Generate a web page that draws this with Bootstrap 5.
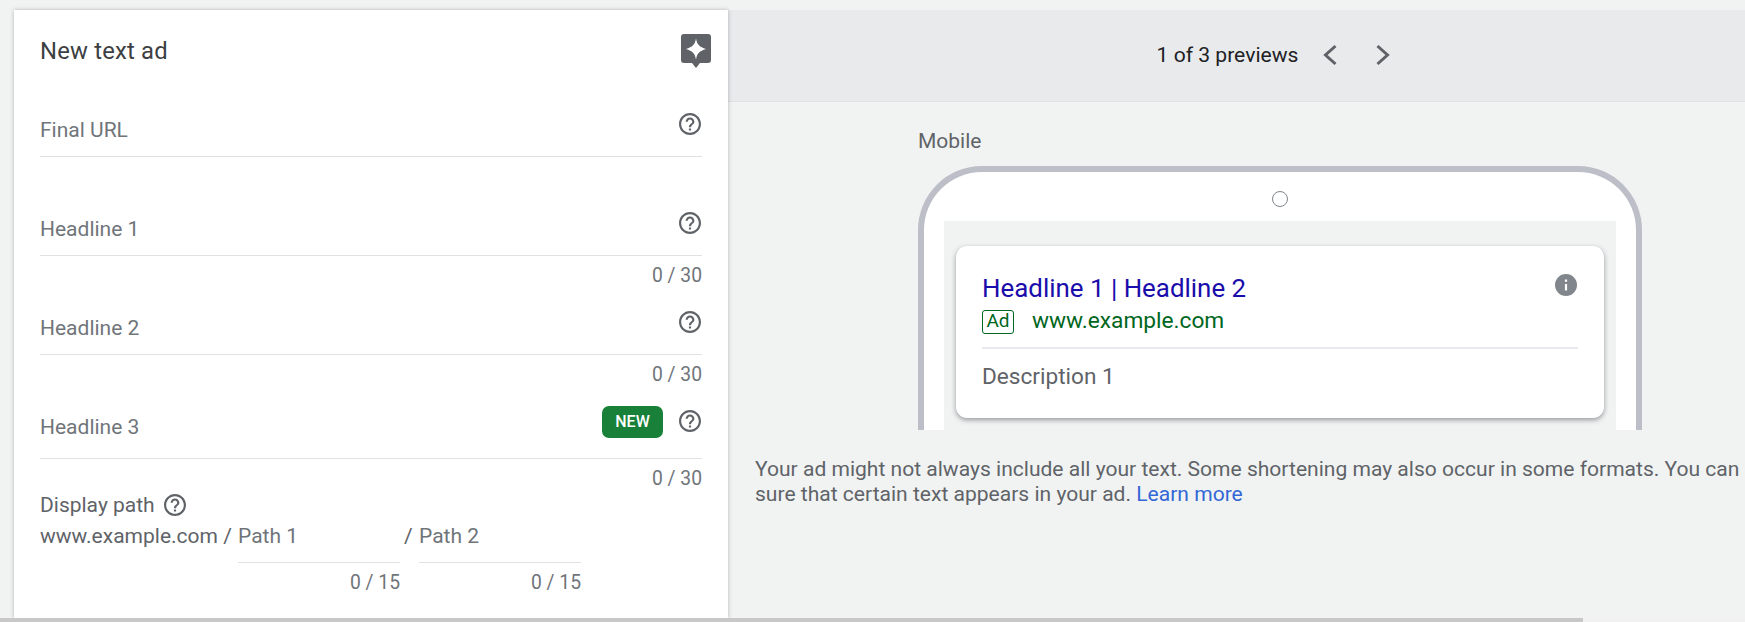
<!DOCTYPE html>
<html lang="en">
<head>
<meta charset="utf-8">
<title>New text ad</title>
<link href="https://cdn.jsdelivr.net/npm/bootstrap@5.3.0/dist/css/bootstrap.min.css" rel="stylesheet">
<style>
html,body{height:622px;overflow:hidden}
body{background:#f1f3f3;font-family:Roboto,"Liberation Sans",sans-serif;color:#5f6368}
.stage{height:618px;padding:10px 0 0 14px;overflow:hidden}
.editor{width:714px;flex:0 0 714px;background:#fff;box-shadow:0 0 4px rgba(60,64,67,.35);padding:0 26px;position:relative;z-index:1}
.editor-head{height:97px;padding-top:24px}
.editor-title{font-size:23.800px;line-height:28px;margin:3px 0 0;font-weight:400;color:#3c4043;letter-spacing:.2px}
.spark{width:30px;height:34px;margin-right:-9px}
.fld{height:50px;border-bottom:1px solid #dfe1e5;padding-bottom:14px}
.fld-tall{height:55px;padding-bottom:19px}
.fld-label{font-size:21px;line-height:24px;color:#70757a}
.help-ico{width:22px;height:22px;fill:#5f6368;flex:none}
.fld-tail{margin-bottom:7px;margin-right:1px}
.fld-tall .fld-tail{margin-bottom:1px;height:32px}
.fld-tall .help-ico{margin-bottom:2px}
.tag-new{width:61px;height:32px;background:#188038;color:#fff;font-size:16px;font-weight:500;border-radius:7px;margin-right:16px}
.counter{height:49px;padding-top:8px;font-size:19.300px;line-height:24px;text-align:right;color:#70757a}
.counter-last{height:auto;padding-top:8px}
.path-title{font-size:21px;line-height:24px;margin-top:2px;height:24px}
.path-title .help-ico{margin-left:1px}
.path-row{margin-top:7px;font-size:21px;line-height:24px}
.path-domain{width:198px;flex:none;white-space:nowrap}
.path-col{width:162px;flex:none}
.path-input{height:39px;border-bottom:1px solid #dfe1e5;color:#70757a}
.path-sep{width:19px;flex:none}
.preview{width:1091px;flex:0 0 1091px}
.preview-bar{height:92px;background:#e8eaec;border-bottom:1px solid #dfe1e5;font-size:21.100px;color:#202124;padding-bottom:2px}
.chev{width:14px;height:22px;fill:none;stroke:#5f6368;stroke-width:3}
.chev-a{margin-left:25px}
.chev-b{margin-left:39px}
.preview-body{padding:0 27px}
.device-label{margin:27px 0 0 163px;font-size:21px;line-height:24px;height:25px}
.device{width:724px;height:264px;margin:12px 0 0 163px;border:6px solid #bcbfc7;border-bottom:0;border-radius:64px 64px 0 0;background:#fff;overflow:hidden}
.cam{width:16px;height:16px;border:1px solid #80868b;border-radius:50%;margin:19px auto 14px}
.screen{margin:0 20px;height:209px;background:#f1f3f3;padding:25px 12px 0}
.ad-card{background:#fff;border-radius:11px;height:172px;padding:27px 26px 0;box-shadow:0 2px 5px rgba(60,64,67,.5)}
.ad-head{font-size:25.900px;line-height:30px;color:#1a0dab}
.info-ico{width:22px;height:22px;margin:1px 1px 0 0;fill:#80868b;flex:none}
.ad-url{margin-top:7px;height:24px;font-size:22.700px;line-height:22px;color:#006621}
.ad-tag{width:32px;height:24px;border:1px solid #006621;border-radius:3px;font-size:19px;line-height:20px;text-align:center;margin-right:18px}
.ad-rule{height:2px;background:#e8eaed;margin-top:13px}
.ad-desc{margin-top:14px;font-size:22.600px;line-height:28px;color:#5f6368}
.notice{margin:26px 0 0;font-size:21.050px;line-height:25px;color:#5f6368;white-space:nowrap}
.notice a{color:#3367d6;text-decoration:none}
.hscroll{height:4px;background:#f1f1f1}
.hthumb{width:1583px;height:4px;background:#c8c8c8}
</style>
</head>
<body>
<svg width="0" height="0" class="d-block position-absolute">
<symbol id="help" viewBox="2 2 20 20"><path d="M11 18h2v-2h-2v2zm1-16C6.48 2 2 6.48 2 12s4.48 10 10 10 10-4.48 10-10S17.52 2 12 2zm0 18c-4.41 0-8-3.59-8-8s3.59-8 8-8 8 3.59 8 8-3.59 8-8 8zm0-14c-2.21 0-4 1.79-4 4h2c0-1.1.9-2 2-2s2 .9 2 2c0 2-3 1.75-3 5h2c0-2.25 3-2.5 3-5 0-2.21-1.79-4-4-4z"/></symbol>
</svg>
<div class="stage d-flex">
  <div class="editor">
    <div class="editor-head d-flex justify-content-between align-items-start">
      <h1 class="editor-title">New text ad</h1>
      <svg class="spark" viewBox="0 0 30 34"><path d="M3 0h24a3 3 0 0 1 3 3v23a3 3 0 0 1-3 3h-8l-4 5-4-5H3a3 3 0 0 1-3-3V3a3 3 0 0 1 3-3z" fill="#5f6368"/><path d="M15 4.500c1 6 3.500 8.500 10 10.500-6.500 2-9 4.500-10 10.500-1-6-3.500-8.500-10-10.500 6.500-2 9-4.500 10-10.500z" fill="#fff"/></svg>
    </div>
    <div class="fld d-flex justify-content-between align-items-end"><span class="fld-label">Final URL</span><svg class="help-ico fld-tail"><use href="#help"/></svg></div>
    <div class="counter"></div>
    <div class="fld d-flex justify-content-between align-items-end"><span class="fld-label">Headline 1</span><svg class="help-ico fld-tail"><use href="#help"/></svg></div>
    <div class="counter">0 / 30</div>
    <div class="fld d-flex justify-content-between align-items-end"><span class="fld-label">Headline 2</span><svg class="help-ico fld-tail"><use href="#help"/></svg></div>
    <div class="counter">0 / 30</div>
    <div class="fld fld-tall d-flex justify-content-between align-items-end"><span class="fld-label">Headline 3</span><div class="fld-tail d-flex align-items-center"><span class="tag-new d-flex align-items-center justify-content-center">NEW</span><svg class="help-ico"><use href="#help"/></svg></div></div>
    <div class="counter counter-last">0 / 30</div>
    <div class="path-title d-flex align-items-center gap-2">Display path <svg class="help-ico"><use href="#help"/></svg></div>
    <div class="path-row d-flex">
      <div class="path-domain">www.example.com /</div>
      <div class="path-col"><div class="path-input">Path 1</div><div class="counter counter-last">0 / 15</div></div>
      <div class="path-sep ps-1">/</div>
      <div class="path-col"><div class="path-input">Path 2</div><div class="counter counter-last">0 / 15</div></div>
    </div>
  </div>
  <div class="preview">
    <div class="preview-bar d-flex align-items-center justify-content-center">
      <span>1 of 3 previews</span>
      <svg class="chev chev-a" viewBox="0 0 14 22"><path d="M12.500 2 2.500 11l10 9"/></svg>
      <svg class="chev chev-b" viewBox="0 0 14 22"><path d="M1.500 2l10 9-10 9"/></svg>
    </div>
    <div class="preview-body">
      <div class="device-label">Mobile</div>
      <div class="device">
        <div class="cam"></div>
        <div class="screen">
          <div class="ad-card">
            <div class="d-flex justify-content-between align-items-start">
              <div class="ad-head">Headline 1 | Headline 2</div>
              <svg class="info-ico" viewBox="2 2 20 20"><path d="M12 2a10 10 0 1 0 0 20 10 10 0 0 0 0-20zm1 15h-2v-6h2v6zm0-8h-2V7h2v2z"/></svg>
            </div>
            <div class="ad-url d-flex"><span class="ad-tag">Ad</span><span>www.example.com</span></div>
            <div class="ad-rule"></div>
            <div class="ad-desc">Description 1</div>
          </div>
        </div>
      </div>
      <p class="notice">Your ad might not always include all your text. Some shortening may also occur in some formats. You can<br>sure that certain text appears in your ad. <a href="#">Learn more</a></p>
    </div>
  </div>
</div>
<div class="hscroll"><div class="hthumb"></div></div>
<script src="https://cdn.jsdelivr.net/npm/bootstrap@5.3.0/dist/js/bootstrap.bundle.min.js"></script>
</body>
</html>
